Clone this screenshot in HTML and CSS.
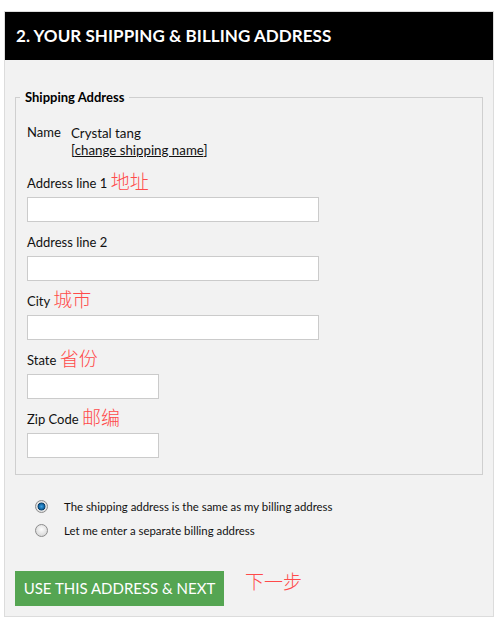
FILE: index.html
```html
<!DOCTYPE html>
<html lang="en">
<head>
<meta charset="utf-8">
<title>Shipping &amp; Billing Address</title>
<link rel="stylesheet" href="styles.css">
</head>
<body>
<section class="panel">
  <h2 class="panel-head">2. YOUR SHIPPING &amp; BILLING ADDRESS</h2>
  <div class="panel-body">
    <fieldset class="shipping">
      <legend>Shipping Address</legend>
      <div class="name-row">
        <span class="name-label">Name</span>
        <div class="name-value">
          <div>Crystal tang</div>
          <div>[<a href="#" class="change-link">change shipping name</a>]</div>
        </div>
      </div>
      <div class="field">
        <label class="field-label">Address line 1 <span class="note">地址</span></label>
        <input class="text-input" type="text">
      </div>
      <div class="field">
        <label class="field-label">Address line 2</label>
        <input class="text-input" type="text">
      </div>
      <div class="field">
        <label class="field-label">City <span class="note">城市</span></label>
        <input class="text-input" type="text">
      </div>
      <div class="field">
        <label class="field-label">State <span class="note">省份</span></label>
        <input class="text-input short" type="text">
      </div>
      <div class="field">
        <label class="field-label">Zip Code <span class="note">邮编</span></label>
        <input class="text-input short" type="text">
      </div>
    </fieldset>
    <div class="radios">
      <label class="radio-row"><input type="radio" name="billing" class="radio" checked><span>The shipping address is the same as my billing address</span></label>
      <label class="radio-row"><input type="radio" name="billing" class="radio"><span>Let me enter a separate billing address</span></label>
    </div>
    <div class="actions">
      <button class="next-btn" type="button">USE THIS ADDRESS &amp; NEXT</button>
      <span class="next-note">下一步</span>
    </div>
  </div>
</section>
</body>
</html>
```

FILE: styles.css
```css
html, body {
  margin: 0;
  background: #fff;
}
body {
  padding: 11px 0 0 4px;
  font-family: Lato, "Open Sans", "Liberation Sans", "Noto Sans CJK SC", sans-serif;
  color: #111;
}
.panel {
  width: 488px;
  border: 1px solid #dcdcdc;
  background: #f2f2f2;
}
.panel-head {
  margin: 0;
  height: 48px;
  background: #000;
  color: #fff;
  padding-left: 11px;
  font-size: 17px;
  font-weight: 700;
  line-height: 48px;
  letter-spacing: 0.05px;
}
.panel-body {
  padding: 29px 10px 10px 10px;
}
.shipping {
  margin: 0;
  border: 1px solid #cfcfcf;
  padding: 0 11px 16px 11px;
}
.shipping legend {
  padding: 0 5px;
  margin-left: -7px;
  font-size: 13px;
  font-weight: 700;
  line-height: 16px;
  color: #000;
}
.name-row {
  display: flex;
  margin-top: 18px;
  font-size: 13px;
}
.name-label {
  width: 44px;
  line-height: 18px;
}
.name-value {
  line-height: 17px;
  padding-top: 2px;
  font-size: 13.3px;
}
.change-link {
  color: #111;
  text-decoration: underline;
}
.field {
  margin-top: 15px;
}
.field + .field {
  margin-top: 11px;
}
.field-label {
  display: block;
  height: 18px;
  margin-bottom: 5px;
  font-size: 13px;
  line-height: 18px;
}
.note {
  font-family: "Noto Sans CJK SC", sans-serif;
  color: #ff4a4a;
  font-size: 19px;
  font-weight: 300;
  line-height: 0;
  vertical-align: -1px;
}
.text-input {
  display: block;
  box-sizing: border-box;
  width: 292px;
  height: 25px;
  margin: 0;
  border: 1px solid #cbcbcb;
  background: #fff;
  padding: 0 4px;
}
.text-input.short {
  width: 132px;
}
.radios {
  margin-top: 19px;
  padding-left: 20px;
}
.radio-row {
  display: flex;
  align-items: center;
  height: 24px;
  font-size: 11.4px;
  color: #111;
}
.radio {
  appearance: none;
  -webkit-appearance: none;
  box-sizing: border-box;
  width: 13px;
  height: 13px;
  margin: 0 16px 0 0;
  border-radius: 50%;
  border: 1px solid #8c8c8c;
  background: radial-gradient(circle at 50% 40%, #fdfdfd 0, #dcdcdc 70%, #c8c8c8 100%);
}
.radio:checked {
  background: radial-gradient(circle at 50% 50%, #3ea3e6 0, #156aa8 2.5px, #0c3e66 3.6px, #e6e6e6 4.3px, #d2d2d2 100%);
}
.actions {
  display: flex;
  align-items: flex-start;
  margin-top: 29px;
}
.next-btn {
  width: 209px;
  height: 35px;
  border: 0;
  margin: 0;
  padding: 0;
  background: #55a552;
  color: #fff;
  font-family: Lato, "Liberation Sans", sans-serif;
  font-size: 15px;
  line-height: 35px;
  text-align: center;
}
.next-note {
  margin-left: 21px;
  margin-top: 0;
  font-family: "Noto Sans CJK SC", sans-serif;
  color: #ff4a4a;
  font-size: 19px;
  font-weight: 300;
  line-height: 19px;
}
```
